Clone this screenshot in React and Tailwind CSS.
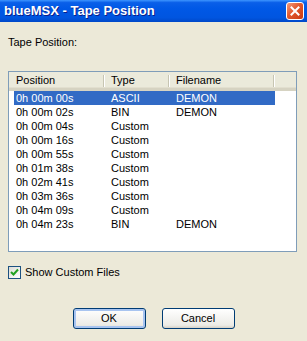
import React from "react";

const rows = [
  ["0h 00m 00s", "ASCII", "DEMON"],
  ["0h 00m 02s", "BIN", "DEMON"],
  ["0h 00m 04s", "Custom", ""],
  ["0h 00m 16s", "Custom", ""],
  ["0h 00m 55s", "Custom", ""],
  ["0h 01m 38s", "Custom", ""],
  ["0h 02m 41s", "Custom", ""],
  ["0h 03m 36s", "Custom", ""],
  ["0h 04m 09s", "Custom", ""],
  ["0h 04m 23s", "BIN", "DEMON"],
];

export default function App() {
  return (
    <div
      className="w-[307px] h-[341px] bg-[#ECE9D8] flex flex-col text-[11px] text-black overflow-hidden"
      style={{ fontFamily: '"Liberation Sans", Arial, sans-serif' }}
    >
      {/* Title bar */}
      <div className="h-[22px] flex items-center justify-between pl-[4px] pr-[3px] bg-[linear-gradient(to_bottom,#3D95FF_0%,#0A5FE8_12%,#0058E6_40%,#0055E0_80%,#0048C8_100%)]">
        <span className="text-white font-bold text-[13px] [text-shadow:1px_1px_0_#0A1E8A]">
          blueMSX - Tape Position
        </span>
        <div className="w-[18px] h-[18px] rounded-[3px] border border-white bg-[linear-gradient(135deg,#F29B7E_0%,#E2582E_45%,#C93A12_100%)] flex items-center justify-center">
          <svg width="10" height="10" viewBox="0 0 10 10">
            <path d="M1.5 1.5 L8.5 8.5 M8.5 1.5 L1.5 8.5" stroke="white" strokeWidth="2" strokeLinecap="square" />
          </svg>
        </div>
      </div>

      {/* Body */}
      <div className="flex flex-col px-[8px] pr-[10px]">
        <div className="mt-[14px] h-[13px] leading-[13px]">Tape Position:</div>

        {/* List */}
        <div className="mt-[22px] h-[181px] border border-[#7F9DB9] bg-white flex flex-col">
          <div className="h-[19px] flex bg-[#EBEADB] border-b-[3px] border-b-[#D6D3C2] shadow-[inset_0_-1px_0_#E2DFCF]">
            <div className="w-[96px] pl-[7px] flex items-center relative">
              Position
              <span className="absolute right-0 top-[3px] h-[12px] w-[2px] border-l border-[#C7C5B2] border-r border-r-white" />
            </div>
            <div className="w-[65px] pl-[6px] flex items-center relative">
              Type
              <span className="absolute right-0 top-[3px] h-[12px] w-[2px] border-l border-[#C7C5B2] border-r border-r-white" />
            </div>
            <div className="w-[105px] pl-[6px] flex items-center relative">
              Filename
              <span className="absolute right-0 top-[3px] h-[12px] w-[2px] border-l border-[#C7C5B2] border-r border-r-white" />
            </div>
            <div className="flex-1" />
          </div>
          <div className="flex flex-col">
            {rows.map((r, i) => (
              <div key={i} className="h-[14px] flex leading-[14px]">
                <div
                  className={
                    "ml-[5px] w-[261px] flex " +
                    (i === 0 ? "bg-[#316AC5] text-white" : "")
                  }
                >
                  <div className="w-[91px] pl-[2px]">{r[0]}</div>
                  <div className="w-[65px] pl-[6px]">{r[1]}</div>
                  <div className="flex-1 pl-[6px]">{r[2]}</div>
                </div>
              </div>
            ))}
          </div>
        </div>

        {/* Checkbox */}
        <div className="mt-[14px] flex items-center h-[13px]">
          <div className="w-[13px] h-[13px] border border-[#1C5180] bg-[linear-gradient(135deg,#DCDBD5,#FFFFFF)] flex items-center justify-center">
            <svg width="9" height="9" viewBox="0 0 9 9">
              <path d="M1 4 L3.5 6.5 L8 1.5" stroke="#21A121" strokeWidth="2" fill="none" />
            </svg>
          </div>
          <span className="ml-[4px]">Show Custom Files</span>
        </div>

        {/* Buttons */}
        <div className="mt-[29px] flex justify-center gap-[16px] pl-[2px]">
          <button className="w-[73px] h-[21px] rounded-[3px] border border-[#003C74] bg-[linear-gradient(to_bottom,#FFFFFF,#ECEBE6_85%,#D6D0C5)] shadow-[inset_0_0_0_2px_#A8C4F0] text-[11px] text-black">
            OK
          </button>
          <button className="w-[73px] h-[21px] rounded-[3px] border border-[#003C74] bg-[linear-gradient(to_bottom,#FFFFFF,#ECEBE6_85%,#D6D0C5)] text-[11px] text-black">
            Cancel
          </button>
        </div>
      </div>
    </div>
  );
}
